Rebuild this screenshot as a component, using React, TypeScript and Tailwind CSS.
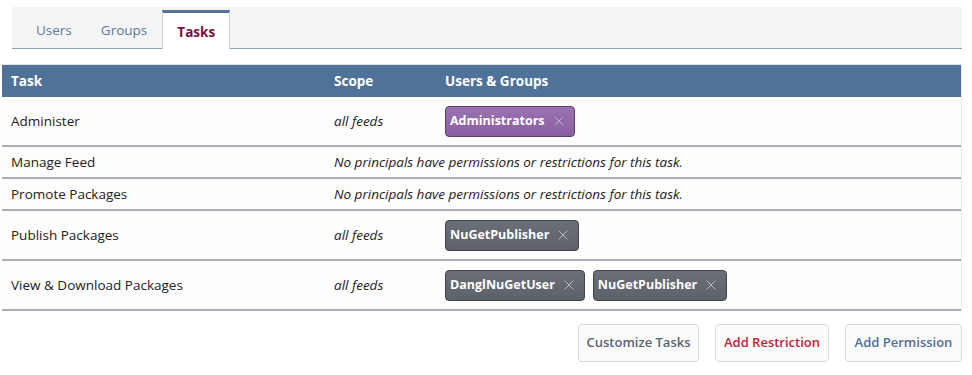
import { X } from 'lucide-react';

type Chip = { name: string; kind: 'group' | 'user' };
type Row = { task: string; scope?: string; chips: Chip[] };

const rows: Row[] = [
  { task: 'Administer', scope: 'all feeds', chips: [{ name: 'Administrators', kind: 'group' }] },
  { task: 'Manage Feed', chips: [] },
  { task: 'Promote Packages', chips: [] },
  { task: 'Publish Packages', scope: 'all feeds', chips: [{ name: 'NuGetPublisher', kind: 'user' }] },
  {
    task: 'View & Download Packages',
    scope: 'all feeds',
    chips: [
      { name: 'DanglNuGetUser', kind: 'user' },
      { name: 'NuGetPublisher', kind: 'user' },
    ],
  },
];

function Principal({ chip }: { chip: Chip }) {
  const cls =
    chip.kind === 'group'
      ? 'bg-gradient-to-b from-[#9a73b0] to-[#8a5fa2] border-[#5c3f6e]'
      : 'bg-gradient-to-b from-[#6b6f78] to-[#5d6169] border-[#40434a]';
  return (
    <span className={`inline-flex items-center h-[31px] pl-[4px] pr-[7px] rounded-[4px] border text-white font-bold text-[12.5px] ${cls}`}>
      {chip.name}
      <X className="ml-[6px] w-[16px] h-[16px] text-[#b9bcc2]" strokeWidth={1.5} />
    </span>
  );
}

export default function App() {
  return (
    <div className="w-[972px] h-[375px] bg-white font-['Open_Sans',sans-serif] text-[13.5px] text-[#222]">
      <div className="pt-[7px] pl-[12px] pr-[10px]">
        <div className="flex h-[42px] bg-[#f4f4f4] border-b border-[#8ea2ba]">
          <div className="pl-[24px] pr-[22px] flex items-center pt-[5px] text-[#5b7aa1]">Users</div>
          <div className="pl-[7px] pr-[6px] flex items-center pt-[5px] text-[#5b7aa1]">Groups</div>
          <div className="ml-[9px] mt-[3px] -mb-px w-[68px] flex items-center justify-center pt-[2px] bg-white border-t-[3px] border-t-[#52739a] border-x border-x-[#d2d6dc] font-bold text-[#7b0e3d]">
            Tasks
          </div>
        </div>
      </div>

      <div className="mt-[15px] ml-[2px] w-[960px] border-r border-[#e8e8e8]">
        <div className="grid grid-cols-[332px_111px_1fr] h-[33px] items-center bg-[#4f7299] text-white font-bold border-t border-[#e4e4e4]">
          <div className="pl-[9px]">Task</div>
          <div>Scope</div>
          <div>Users &amp; Groups</div>
        </div>
        {rows.map((r) => (
          <div
            key={r.task}
            className={`grid grid-cols-[332px_111px_1fr] items-center bg-[#fdfdfd] border-b-2 border-[#aaaeb6] ${r.chips.length ? 'h-[50px]' : 'h-[32px]'}`}
          >
            <div className="pl-[9px]">{r.task}</div>
            {r.chips.length ? (
              <>
                <div className="italic">{r.scope}</div>
                <div className="flex gap-[8px]">
                  {r.chips.map((c, i) => (
                    <Principal key={i} chip={c} />
                  ))}
                </div>
              </>
            ) : (
              <div className="col-span-2 italic">No principals have permissions or restrictions for this task.</div>
            )}
          </div>
        ))}
      </div>

      <div className="flex justify-end gap-[16px] mt-[13px] pr-[10px]">
        <button className="h-[38px] w-[121px] rounded-[4px] border border-[#d6dadf] bg-[#fbfbfc] font-semibold text-[13px] text-[#5b6371]">
          Customize Tasks
        </button>
        <button className="h-[38px] w-[114px] rounded-[4px] border border-[#d6dadf] bg-[#fbfbfc] font-semibold text-[13px] text-[#c21f3a]">
          Add Restriction
        </button>
        <button className="h-[38px] w-[117px] rounded-[4px] border border-[#d6dadf] bg-[#fbfbfc] font-semibold text-[13px] text-[#4e6f97]">
          Add Permission
        </button>
      </div>
    </div>
  );
}
